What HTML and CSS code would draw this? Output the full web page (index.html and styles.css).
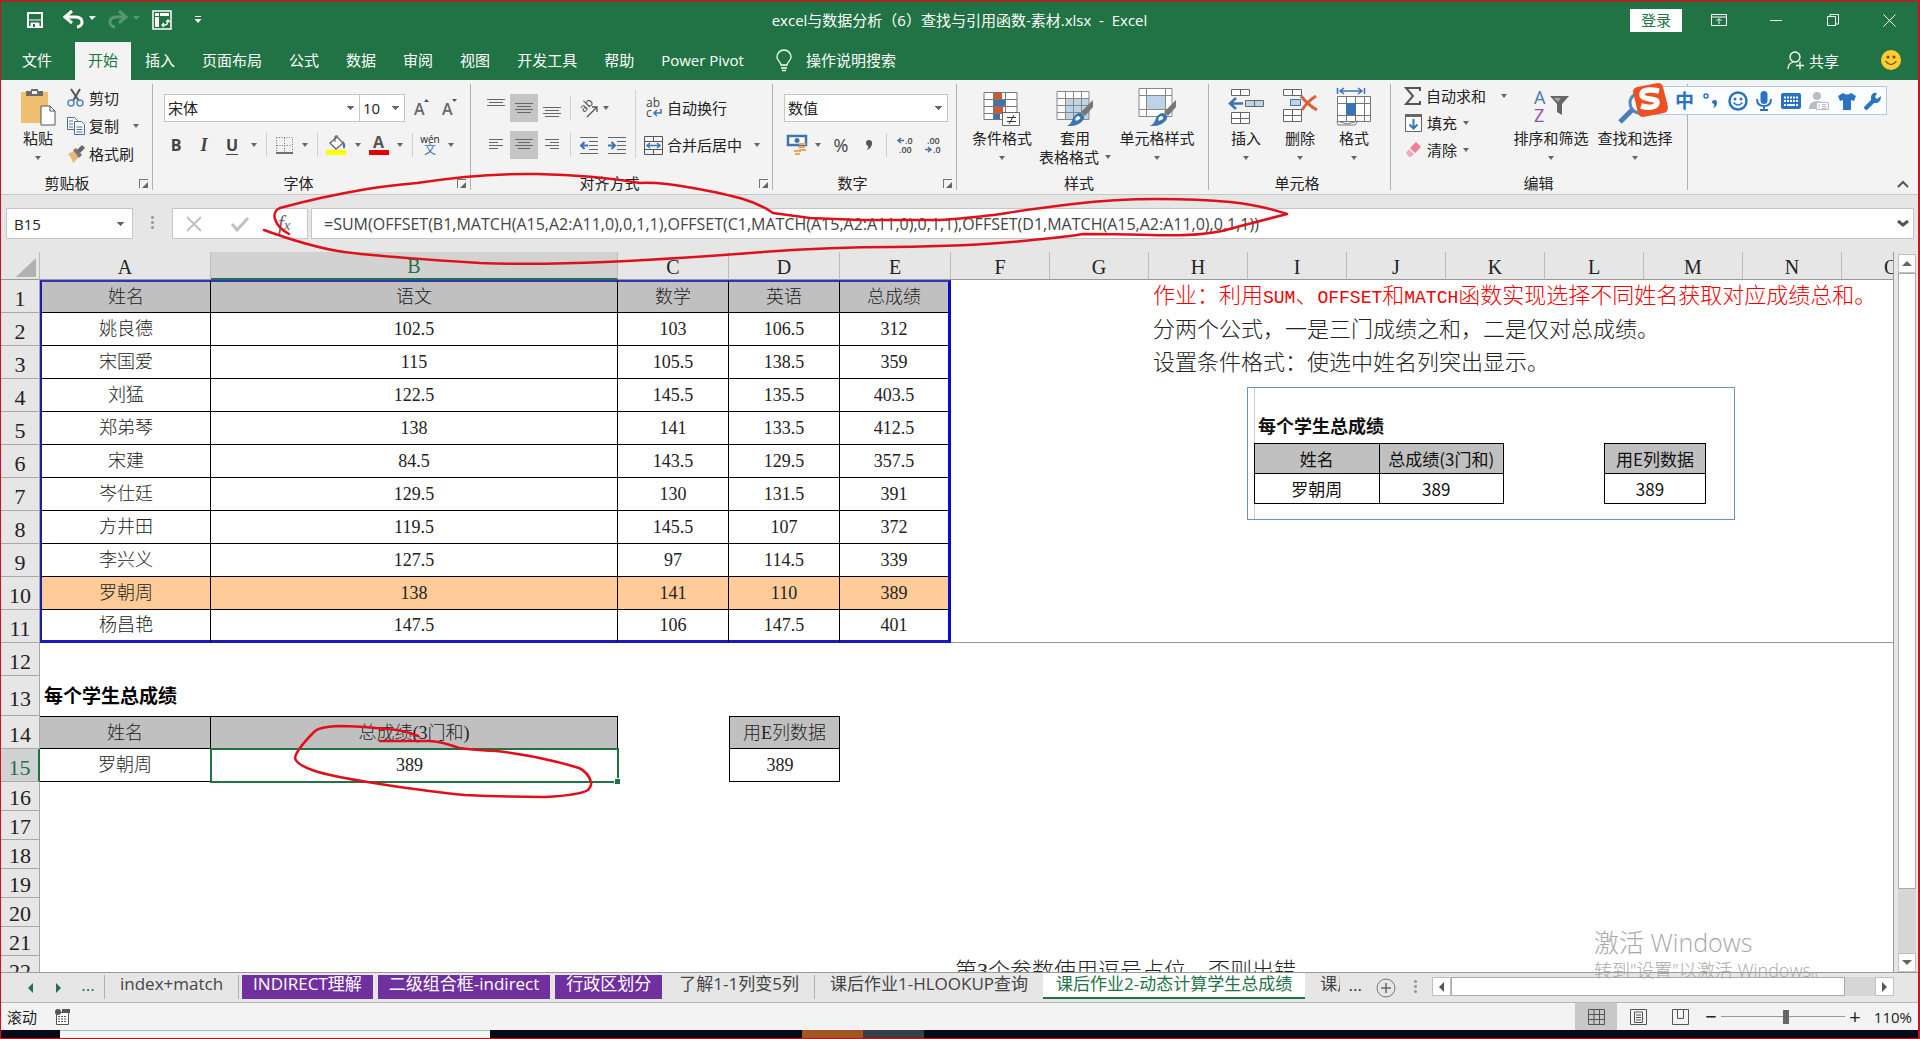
FILE: index.html
```html
<!DOCTYPE html>
<html lang="zh-CN">
<head>
<meta charset="utf-8">
<title>excel与数据分析（6）查找与引用函数-素材.xlsx - Excel</title>
<link rel="stylesheet" href="styles.css">
</head>
<body>
<div class="window">
  <header class="titlebar">
    <div class="quick">
      <button class="q" aria-label="保存"><svg width="18" height="18" viewBox="0 0 18 18"><path d="M2 2h14v14H2z" fill="none" stroke="#fff" stroke-width="2"/><path d="M2 9h14M5 12h8v4H5z" fill="#fff" stroke="#fff"/><path d="M7 13h2v3H7z" fill="#217346"/></svg></button>
      <button class="q wide" aria-label="撤消"><svg width="32" height="20" viewBox="0 0 32 20"><path d="M2 7h9c9 0 9 9 2 10" fill="none" stroke="#fff" stroke-width="3"/><path d="M8 1L1 7l7 6" fill="none" stroke="#fff" stroke-width="3"/><path d="M25 6h7l-4 4z" fill="#fff"/></svg></button>
      <button class="q wide dim" aria-label="恢复"><svg width="32" height="20" viewBox="0 0 32 20"><path d="M17 7H9C0 7 0 16 7 17" fill="none" stroke="#fff" stroke-width="3"/><path d="M11 1l7 6-7 6" fill="none" stroke="#fff" stroke-width="3"/><path d="M25 6h7l-4 4z" fill="#fff"/></svg></button>
      <button class="q" aria-label="数据透视表"><svg width="20" height="20" viewBox="0 0 20 20"><path d="M1 1h18v18H1z" fill="none" stroke="#fff" stroke-width="1.5"/><path d="M3 3h4v3H3zM8 3h9v3H8zM3 7h4v10H3z" fill="#fff"/><path d="M10 15h3q3 0 3-5M12 13l-2 2 2 2M14 12l2-2 2 2" fill="none" stroke="#fff" stroke-width="1.3"/></svg></button>
      <button class="q" aria-label="自定义快速访问工具栏"><svg width="8" height="8" viewBox="0 0 8 8"><path d="M1 .5h6" stroke="#fff"/><path d="M.5 3h7L4 7z" fill="#fff"/></svg></button>
    </div>
    <h1 class="doc">excel与数据分析（6）查找与引用函数-素材.xlsx &nbsp;-&nbsp; Excel</h1>
    <div class="winctl">
      <button class="login">登录</button>
      <button class="w" aria-label="功能区显示选项"><svg width="16" height="14" viewBox="0 0 16 14"><path d="M.5 1.500h15v11H.5zM1 4h14M8 11V6M5.500 8L8 5.500 10.500 8" fill="none" stroke="#fff"/></svg></button>
      <button class="w" aria-label="最小化"><svg width="12" height="12"><path d="M0 6.500h12" stroke="#fff"/></svg></button>
      <button class="w" aria-label="还原"><svg width="12" height="12" viewBox="0 0 12 12"><path d="M.5 2.500h8v9h-8zM3 2.500v-2h8.500V10H9" fill="none" stroke="#fff"/></svg></button>
      <button class="w" aria-label="关闭"><svg width="13" height="13" viewBox="0 0 13 13"><path d="M.5.5l12 12M12.500.5l-12 12" stroke="#fff"/></svg></button>
    </div>
  </header>

  <nav class="tabs">
    <a href="#" class="tab file">文件</a>
    <a href="#" class="tab on">开始</a>
    <a href="#" class="tab">插入</a>
    <a href="#" class="tab">页面布局</a>
    <a href="#" class="tab">公式</a>
    <a href="#" class="tab">数据</a>
    <a href="#" class="tab">审阅</a>
    <a href="#" class="tab">视图</a>
    <a href="#" class="tab">开发工具</a>
    <a href="#" class="tab">帮助</a>
    <a href="#" class="tab">Power Pivot</a>
    <a href="#" class="tab tell"><svg width="16" height="22" viewBox="0 0 16 22"><path d="M5 15c0-3-4-4-4-8a7 7 0 0 1 14 0c0 4-4 5-4 8zM5 18h6M6 20.500h4" fill="none" stroke="#fff" stroke-width="1.300"/></svg>操作说明搜索</a>
    <span class="grow"></span>
    <a href="#" class="share"><svg width="18" height="19" viewBox="0 0 18 19"><circle cx="8" cy="6" r="5" fill="none" stroke="#fff" stroke-width="1.300"/><path d="M1 18c0-4 2-6 5-7M9 14.500h8M13 10.500v8" fill="none" stroke="#fff" stroke-width="1.300"/></svg>共享</a>
    <button class="smile" aria-label="反馈"><svg width="20" height="20" viewBox="0 0 20 20"><circle cx="10" cy="10" r="10" fill="#fc3"/><circle cx="7" cy="7" r="1.500" fill="#6b4a00"/><circle cx="13" cy="7" r="1.500" fill="#6b4a00"/><path d="M4.500 11q5.500 7 11 0" fill="none" stroke="#6b4a00" stroke-width="1.200"/></svg></button>
  </nav>

  <section class="ribbon">
    <div class="group clip">
      <div class="tools">
        <button class="big paste"><svg width="36" height="38" viewBox="0 0 36 38"><path d="M1 4h27v31H1z" fill="#f0c070"/><path d="M6 3h5V1h7v2h5v5H6z" fill="#6a6a6a"/><path d="M12 3h5v3h-5z" fill="#f3f3f3"/><path d="M21 18h9l5 5v14H21z" fill="#fff" stroke="#555"/><path d="M30 18v5h5" fill="none" stroke="#555"/></svg><span>粘贴</span><i class="dd"></i></button>
        <div class="stack">
          <button class="sm"><svg width="18" height="18" viewBox="0 0 18 18"><path d="M4 0l8 12M13 0L6 12" stroke="#555" stroke-width="2"/><circle cx="4" cy="14" r="3" fill="none" stroke="#5b87c0" stroke-width="1.500"/><circle cx="13" cy="14" r="3" fill="none" stroke="#5b87c0" stroke-width="1.500"/></svg>剪切</button>
          <button class="sm"><svg width="18" height="18" viewBox="0 0 18 18"><path d="M.5.5h7l3 3v9H.5z" fill="#fff" stroke="#4a6e98"/><path d="M7.500 4.500h7l3 3v10h-10z" fill="#fff" stroke="#4a6e98"/><path d="M2 4h4M2 7h4M2 10h4M9.500 10h6M9.500 12.500h6M9.500 15h6" stroke="#4a6e98"/></svg>复制<i class="dd"></i></button>
          <button class="sm"><svg width="18" height="18" viewBox="0 0 18 18"><path d="M1 9l6-3 5 6-6 6q-1-5-5-9" fill="#e8b878"/><path d="M6 5l3-2 6 7-3 3z" fill="#777"/><path d="M10 5l5-5 3 3-5 5z" fill="#666"/></svg>格式刷</button>
        </div>
      </div>
      <div class="label">剪贴板</div><i class="launch"></i>
    </div>

    <div class="group font">
      <div class="tools rows">
        <div class="row">
          <select class="box fname" aria-label="字体"><option>宋体</option></select><select class="box fsize" aria-label="字号"><option>10</option></select>
          <button class="ib" aria-label="增大字号"><svg width="16" height="18" viewBox="0 0 16 18"><text x="0" y="16" class="ga">A</text><path d="M10 3l2.500-3L15 3z" fill="#555"/></svg></button>
          <button class="ib" aria-label="减小字号"><svg width="16" height="18" viewBox="0 0 16 18"><text x="0" y="16" class="ga">A</text><path d="M10 0l2.500 3L15 0z" fill="#555"/></svg></button>
        </div>
        <div class="row">
          <button class="ib b">B</button><button class="ib b it">I</button><button class="ib b un">U</button><i class="dd slot"></i><i class="sep"></i>
          <button class="ib n" aria-label="边框"><svg width="17" height="17" viewBox="0 0 17 17"><path d="M.5.5h16v15M.5.5v15M8.500 1v15M1 8.500h15" fill="none" stroke="#777" stroke-dasharray="1 1.500"/><path d="M0 16h17" stroke="#444" stroke-width="1.500"/></svg></button><i class="dd slot"></i><i class="sep"></i>
          <button class="ib" aria-label="填充颜色"><svg width="20" height="20" viewBox="0 0 20 20"><path d="M4 8l7-6 6 6-7 6z" fill="#fff" stroke="#666" stroke-width="1.300"/><path d="M9 7V1h3" fill="none" stroke="#555"/><path d="M17 6q4 4 1 8-2-3-1-8" fill="#3b78b8"/><path d="M0 15h20v5H0z" fill="#ff0"/></svg></button><i class="dd slot"></i>
          <button class="ib n" aria-label="字体颜色"><svg width="20" height="20" viewBox="0 0 20 20"><text x="4" y="13" class="gb">A</text><path d="M0 15h20v5H0z" fill="#e00000"/></svg></button><i class="dd slot"></i><i class="sep"></i>
          <button class="ib n wen"><span>wén</span><b>文</b></button><i class="dd slot"></i>
        </div>
      </div>
      <div class="label">字体</div><i class="launch"></i>
    </div>

    <div class="group align">
      <div class="tools">
        <div class="rows">
          <div class="row">
            <button class="ib" aria-label="顶端对齐"><svg width="18" height="18"><path d="M0 .5h18M2 3.500h14M0 6.500h18" class="ln"/></svg></button>
            <button class="ib act" aria-label="垂直居中"><svg width="18" height="18"><path d="M0 4.500h18M2 7.500h14M0 10.500h18M2 13.500h14" class="ln"/></svg></button>
            <button class="ib" aria-label="底端对齐"><svg width="18" height="18"><path d="M0 8.500h18M2 11.500h14M0 14.500h18M2 17.500h14" class="ln"/></svg></button><i class="sep"></i>
            <button class="ib" aria-label="方向"><svg width="20" height="20" viewBox="0 0 20 20"><text x="0" y="0" class="gs" transform="translate(5 15) rotate(-45)">ab</text><path d="M8 19l10-10M13 9h5v5" fill="none" stroke="#555" stroke-width="1.300"/></svg></button><i class="dd near"></i>
          </div>
          <div class="row">
            <button class="ib" aria-label="左对齐"><svg width="14" height="14"><path d="M0 1.500h14M0 4.500h9M0 7.500h14M0 10.500h9" class="ln"/></svg></button>
            <button class="ib act" aria-label="居中"><svg width="18" height="14"><path d="M0 1.500h18M3 4.500h12M0 7.500h18M3 10.500h12" class="ln"/></svg></button>
            <button class="ib" aria-label="右对齐"><svg width="14" height="14"><path d="M0 1.500h14M5 4.500h9M0 7.500h14M5 10.500h9" class="ln"/></svg></button><i class="sep"></i>
            <button class="ib" aria-label="减少缩进"><svg width="18" height="17"><path d="M0 .5h18M9 4.500h9M9 8.500h9M9 12.500h9M0 16.500h18" class="ln"/><path d="M8 8.500H1M4.500 5L1 8.500 4.500 12" class="bl"/></svg></button>
            <button class="ib" aria-label="增加缩进"><svg width="18" height="17"><path d="M0 .5h18M9 4.500h9M9 8.500h9M9 12.500h9M0 16.500h18" class="ln"/><path d="M0 8.500h7M3.500 5L7 8.500 3.500 12" class="bl"/></svg></button>
          </div>
        </div>
        <i class="vsep"></i>
        <div class="rows">
          <div class="row"><button class="sm"><svg width="19" height="19" viewBox="0 0 19 19"><text x="2" y="8" class="gs">ab</text><text x="2" y="18" class="gs">c</text><path d="M17 10v4h-6M13 11l-3 3 3 3" class="bl thin"/></svg>自动换行</button></div>
          <div class="row"><button class="sm"><svg width="19" height="19" viewBox="0 0 19 19"><path d="M.5.500h18v18H.5zM0 5.500h19M0 13.500h19M9.500 0v5M9.500 14v5" fill="none" stroke="#555"/><path d="M3 9.500h13M6 7L3 9.500 6 12M13 7l3 2.500-3 2.500" class="bl thin"/></svg>合并后居中<i class="dd"></i></button></div>
        </div>
      </div>
      <div class="label">对齐方式</div><i class="launch"></i>
    </div>

    <div class="group number">
      <div class="tools rows">
        <div class="row"><select class="box nfmt" aria-label="数字格式"><option>数值</option></select></div>
        <div class="row">
          <button class="ib n" aria-label="会计数字格式"><svg width="20" height="20" viewBox="0 0 20 20"><path d="M1 1h18v9H1z" fill="#fff" stroke="#3f74b0" stroke-width="2.500"/><circle cx="10" cy="5.500" r="2.500" fill="#3f74b0"/><path d="M12 8h7v2h-7zM11 11h7v2h-7zM12 14h7v2h-7zM7 15h7v2H7zM8 18h5v2H8z" fill="#eba85c"/></svg></button><i class="dd slot"></i>
          <button class="ib pct">%</button><button class="ib n" aria-label="千位分隔样式"><svg width="7" height="10" viewBox="0 0 7 10"><circle cx="3" cy="3" r="3" fill="#555"/><path d="M6 3q0 5-5 7 2-3 1-5z" fill="#555"/></svg></button><i class="sep"></i>
          <button class="ib" aria-label="增加小数位数"><svg width="16" height="18" viewBox="0 0 16 18"><text x="8" y="8" class="gn">.0</text><text x="2" y="17" class="gn">.00</text><path d="M7 4.500H1M4 2L1 4.500 4 7" class="bl thin"/></svg></button>
          <button class="ib" aria-label="减少小数位数"><svg width="16" height="18" viewBox="0 0 16 18"><text x="2" y="8" class="gn">.00</text><text x="8" y="17" class="gn">.0</text><path d="M0 13.500h6M3 11l3 2.500L3 16" class="bl thin"/></svg></button>
        </div>
      </div>
      <div class="label">数字</div><i class="launch"></i>
    </div>

    <div class="group styles">
      <div class="tools">
        <button class="big w74"><svg width="38" height="38" viewBox="0 0 38 38"><path d="M1 4h33v28H1z" fill="#fff"/><path d="M11 5h8v7h-8zM11 19h9v6h-9z" fill="#d0592b"/><path d="M11 12h11v7H11zM11 26h6v6h-6z" fill="#3b74b5"/><path d="M1 4.500h33v27H1zM1 11.500h33M1 18.500h33M1 25.500h33M10.500 4v28M22.500 4v28" fill="none" stroke="#777"/><path d="M19.500 24.500h17v13h-17z" fill="#fff" stroke="#666"/><path d="M24 29.500h9M24 33.500h9M31 27l-5 9" stroke="#333"/></svg><span>条件格式</span><i class="dd"></i></button>
        <button class="big w72"><svg width="38" height="38" viewBox="0 0 38 38"><path d="M1 4h32v27H1z" fill="#fff"/><path d="M9 11h24v20H9z" fill="#bdd3e8"/><path d="M1 3.500h32v28H1zM1 10.500h32M1 17.500h32M1 24.500h32M9.500 4v27M17.500 4v27M25.500 4v27" fill="none" stroke="#888"/><path d="M37 12v7l-8 9-4-4z" fill="#777"/><path d="M24 25q5 1 4 6-5 8-17 7 5-3 6-8 3-5 7-5" fill="#3b74b5"/><path d="M22 28q3 1 2 3l-4 2q-2-3 2-5" fill="#fff"/></svg><span>套用</span><span class="tight">表格格式<i class="dd"></i></span></button>
        <button class="big w92"><svg width="38" height="38" viewBox="0 0 38 38"><path d="M1 1h33v28H1z" fill="#fff"/><path d="M8 8h19v13H8z" fill="#bdd3e8"/><path d="M1 .5h33v28H1zM1 7.500h33M1 21.500h33M8.500 1v28M27.500 1v28" fill="none" stroke="#888"/><path d="M38 12v7l-8 9-4-4z" fill="#777"/><path d="M25 25q5 1 4 6-5 8-17 7 5-3 6-8 3-5 7-5" fill="#3b74b5"/><path d="M23 28q3 1 2 3l-4 2q-2-3 2-5" fill="#fff"/></svg><span>单元格样式</span><i class="dd"></i></button>
      </div>
      <div class="label">样式</div>
    </div>

    <div class="group cells">
      <div class="tools">
        <button class="big w54"><svg width="36" height="38" viewBox="0 0 36 38"><path d="M3.500 1.500h18v6h-18zM12.500 1v7M3.500 24.500h18v11h-18zM12.500 24v12M3 30.500h19" fill="#fff" stroke="#666"/><path d="M17.500 12.500h18v6h-18zM26.500 12v7" fill="#bdd3e8" stroke="#666"/><path d="M15 15.500H3M8 10l-6 5.500L8 21" fill="none" stroke="#3b74b5" stroke-width="2.500"/></svg><span>插入</span><i class="dd"></i></button>
        <button class="big w54"><svg width="36" height="38" viewBox="0 0 36 38"><path d="M1.500 1.500h18v6h-18zM10.500 1v7M1.500 21.500h18v12h-18zM10.500 21v13M1 27.500h19" fill="#fff" stroke="#666"/><path d="M8.500 11.500h10v6h-10z" fill="#bdd3e8" stroke="#3b74b5"/><path d="M19 8q7 9 16 14M34 8q-8 5-14 14" fill="none" stroke="#d9623b" stroke-width="3"/></svg><span>删除</span><i class="dd"></i></button>
        <button class="big w54"><svg width="36" height="38" viewBox="0 0 36 38"><path d="M1.500 0v6M28.500 0v6M4 3h22M8 0L4 3l4 3M22 0l4 3-4 3" fill="none" stroke="#3b74b5" stroke-width="1.500"/><path d="M1.500 8.500h33v25h-33zM1 15.500h34M1 27.500h34M10.500 8v25M19.500 8v25M28.500 8v25" fill="#fff" stroke="#777"/><path d="M10 15h10v12H10z" fill="#3b74b5"/><path d="M1 33l10 3 11-3-3 4h-6l-11 0z" fill="#fff" stroke="#777"/></svg><span>格式</span><i class="dd"></i></button>
      </div>
      <div class="label">单元格</div>
    </div>

    <div class="group edit">
      <div class="tools">
        <div class="stack">
          <button class="sm"><svg width="16" height="18" viewBox="0 0 16 18"><path d="M15 4V1H1l7 8-7 8h14v-3" fill="none" stroke="#555" stroke-width="2"/></svg>自动求和<i class="dd"></i></button>
          <button class="sm t"><svg width="17" height="18" viewBox="0 0 17 18"><path d="M.5.5h16v17H.5z" fill="#fff" stroke="#666"/><path d="M0 1.500h17" stroke="#666" stroke-width="3"/><path d="M8.500 5v9M4.500 10.500l4 4 4-4" class="bl"/></svg>填充<i class="dd"></i></button>
          <button class="sm t"><svg width="17" height="18" viewBox="0 0 17 18"><path d="M11 1l5 5-6 6-5-5z" fill="#ea7f98"/><path d="M4 8l5 5-3 3H4l-3-4z" fill="#f2a9b9"/></svg>清除<i class="dd"></i></button>
        </div>
        <button class="big w84"><svg width="36" height="38" viewBox="0 0 36 38"><text x="1" y="16" class="az" fill="#4a76b4">A</text><text x="1" y="34" class="az" fill="#9150a8">Z</text><path d="M17 8h19l-7 8v11l-5-3v-8z" fill="#666"/><path d="M21 10h7l-3 4z" fill="#aaa"/></svg><span>排序和筛选</span><i class="dd"></i></button>
        <button class="big w84"><svg width="36" height="38" viewBox="0 0 36 38"><circle cx="23" cy="15" r="10" fill="#fff" stroke="#5a87c0" stroke-width="3"/><path d="M15 22L3 34" stroke="#4a7cb8" stroke-width="5"/></svg><span>查找和选择</span><i class="dd"></i></button>
      </div>
      <div class="label">编辑</div>
    </div>
    <button class="fold" aria-label="折叠功能区"><svg width="12" height="8"><path d="M1 7l5-5 5 5" fill="none" stroke="#555" stroke-width="2"/></svg></button>

    <div class="ime">
      <svg class="slogo" width="37" height="36" viewBox="0 0 37 36"><path d="M5 5L26 1q4 0 5 4l5 20q0 5-4 6L11 35q-4 0-5-4L1 10q0-4 4-5z" fill="#ee4f23"/><path d="M27 9q-16-3-17 3c-1 7 16 3 15 9-1 5-9 5-16 3" fill="none" stroke="#fff" stroke-width="5.500"/></svg>
      <b>中</b>
      <svg width="16" height="16" viewBox="0 0 16 16"><circle cx="3" cy="3" r="2" fill="none" stroke="#2a73c4" stroke-width="1.500"/><path d="M9 8q5-3 5 2 0 4-4 5 2-2 1-4-2 0-2-3" fill="#2a73c4"/></svg>
      <svg width="20" height="20" viewBox="0 0 20 20"><circle cx="10" cy="10" r="8.500" fill="none" stroke="#2a73c4" stroke-width="2.500"/><circle cx="7" cy="8" r="1.500" fill="#2a73c4"/><circle cx="13" cy="8" r="1.500" fill="#2a73c4"/><path d="M5.500 11.500q4.500 5 9 0" fill="none" stroke="#2a73c4" stroke-width="1.500"/></svg>
      <svg width="16" height="20" viewBox="0 0 16 20"><rect x="4.500" y="0" width="7" height="13" rx="3.500" fill="#2a73c4"/><path d="M1 8q0 7 7 7t7-7M8 15v4M4 19h8" fill="none" stroke="#2a73c4" stroke-width="2"/></svg>
      <svg width="20" height="16" viewBox="0 0 20 16"><rect width="20" height="16" rx="2" fill="#2a73c4"/><path d="M3 4.500h14M3 8h14" stroke="#fff" stroke-width="2" stroke-dasharray="2 1"/><path d="M3 12h2M6 12h8M15 12h2" stroke="#fff" stroke-width="2"/></svg>
      <svg width="20" height="18" viewBox="0 0 20 18"><circle cx="8" cy="4" r="4" fill="#b9bec6"/><path d="M0 17q0-8 8-8 5 0 6 3v5z" fill="#b9bec6"/><path d="M7.500 10.500h12v7h-12z" fill="#fff" stroke="#b9bec6"/><path d="M10 12v4M13 12.500h4M13 14.500h4v2h-4" fill="none" stroke="#b9bec6"/></svg>
      <svg width="18" height="18" viewBox="0 0 18 18"><path d="M5 1q4 3 8 0l5 3-2 5-3-1v10H5V8L2 9 0 4z" fill="#2a73c4"/></svg>
      <svg width="18" height="18" viewBox="0 0 18 18"><path d="M17 4l-4 3-2-2 2-4Q8 0 7 5l0 3-7 7q0 3 3 3l7-7q7 1 7-7" fill="#2a73c4"/></svg>
    </div>
  </section>

  <section class="fbar">
    <select class="box namebox" aria-label="名称框"><option>B15</option></select>
    <i class="dots"></i>
    <div class="fx">
      <svg width="16" height="14"><path d="M1 0l14 14M15 0L1 14" stroke="#c0c0c0" stroke-width="2"/></svg>
      <svg width="18" height="14"><path d="M1 7l5 6L17 1" fill="none" stroke="#c0c0c0" stroke-width="3"/></svg>
      <em>f<small>x</small></em>
    </div>
    <label class="formula"><input type="text" aria-label="编辑栏" value="=SUM(OFFSET(B1,MATCH(A15,A2:A11,0),0,1,1),OFFSET(C1,MATCH(A15,A2:A11,0),0,1,1),OFFSET(D1,MATCH(A15,A2:A11,0),0,1,1))"><svg width="12" height="8"><path d="M1 1l5 4 5-4" fill="none" stroke="#555" stroke-width="3"/></svg></label>
  </section>

  <main class="work">
    <div class="sheet">
      <table class="grid">
        <colgroup><col class="c0"><col class="ca"><col class="cb"><col class="cc"><col class="cc"><col class="cc"><col class="cf"><col class="cf"><col class="cf"><col class="cf"><col class="cf"><col class="cf"><col class="cf"><col class="cf"><col class="cf"><col></colgroup>
        <thead><tr><th class="corner"><svg width="20" height="19"><path d="M20 0v19H0z" fill="#b1b1b1"/></svg></th><th>A</th><th class="sel">B</th><th>C</th><th>D</th><th>E</th><th>F</th><th>G</th><th>H</th><th>I</th><th>J</th><th>K</th><th>L</th><th>M</th><th>N</th><th class="last">O</th></tr></thead>
        <tbody class="data">
          <tr class="hd"><th>1</th><td>姓名</td><td>语文</td><td>数学</td><td>英语</td><td>总成绩</td><td class="x" colspan="2"></td><td class="x note red" colspan="8">作业：利用<code>SUM</code>、<code>OFFSET</code>和<code>MATCH</code>函数实现选择不同姓名获取对应成绩总和。</td></tr>
          <tr><th>2</th><td>姚良德</td><td>102.5</td><td>103</td><td>106.5</td><td>312</td><td class="x" colspan="2"></td><td class="x note" colspan="8">分两个公式，一是三门成绩之和，二是仅对总成绩。</td></tr>
          <tr><th>3</th><td>宋国爱</td><td>115</td><td>105.5</td><td>138.5</td><td>359</td><td class="x" colspan="2"></td><td class="x note" colspan="8">设置条件格式：使选中姓名列突出显示。</td></tr>
          <tr><th>4</th><td>刘猛</td><td>122.5</td><td>145.5</td><td>135.5</td><td>403.5</td><td class="x" colspan="10"></td></tr>
          <tr><th>5</th><td>郑弟琴</td><td>138</td><td>141</td><td>133.5</td><td>412.5</td><td class="x" colspan="10"></td></tr>
          <tr><th>6</th><td>宋建</td><td>84.5</td><td>143.5</td><td>129.5</td><td>357.5</td><td class="x" colspan="10"></td></tr>
          <tr><th>7</th><td>岑仕廷</td><td>129.5</td><td>130</td><td>131.5</td><td>391</td><td class="x" colspan="10"></td></tr>
          <tr><th>8</th><td>方井田</td><td>119.5</td><td>145.5</td><td>107</td><td>372</td><td class="x" colspan="10"></td></tr>
          <tr><th>9</th><td>李兴义</td><td>127.5</td><td>97</td><td>114.5</td><td>339</td><td class="x" colspan="10"></td></tr>
          <tr class="hit"><th>10</th><td>罗朝周</td><td>138</td><td>141</td><td>110</td><td>389</td><td class="x" colspan="10"></td></tr>
          <tr class="end"><th>11</th><td>杨昌艳</td><td>147.5</td><td>106</td><td>147.5</td><td>401</td><td class="x" colspan="10"></td></tr>
        </tbody>
        <tbody class="query">
          <tr><th>12</th><td class="x" colspan="15"></td></tr>
          <tr class="tall"><th>13</th><td class="x ttl" colspan="15">每个学生总成绩</td></tr>
          <tr class="hd"><th>14</th><td>姓名</td><td>总成绩(3门和)</td><td class="x"></td><td class="lb">用E列数据</td><td class="x" colspan="11"></td></tr>
          <tr><th class="sel">15</th><td>罗朝周</td><td class="cur num">389</td><td class="x"></td><td class="lb num">389</td><td class="x" colspan="11"></td></tr>
        </tbody>
        <tbody class="rest">
          <tr><th>16</th><td class="x" colspan="15"></td></tr>
          <tr><th>17</th><td class="x" colspan="15"></td></tr>
          <tr><th>18</th><td class="x" colspan="15"></td></tr>
          <tr><th>19</th><td class="x" colspan="15"></td></tr>
          <tr><th>20</th><td class="x" colspan="15"></td></tr>
          <tr><th>21</th><td class="x" colspan="15"></td></tr>
          <tr><th>22</th><td class="x" colspan="5"></td><td class="x note" colspan="10">第3个参数使用逗号占位，否则出错</td></tr>
        </tbody>
      </table>
      <figure class="pic">
        <figcaption>每个学生总成绩</figcaption>
        <div class="picrow">
          <table class="mini"><tr><th>姓名</th><th>总成绩(3门和)</th></tr><tr><td>罗朝周</td><td class="val">389</td></tr></table>
          <table class="mini one"><tr><th>用E列数据</th></tr><tr><td class="val">389</td></tr></table>
        </div>
      </figure>
    </div>
    <div class="vscroll"><button aria-label="向上"><i class="tri up"></i></button><div class="thumb"></div><div class="track"></div><button aria-label="向下"><i class="tri down"></i></button></div>
  </main>

  <nav class="sheets">
    <button class="nav" aria-label="上一张"><i class="tri left g"></i></button><button class="nav" aria-label="下一张"><i class="tri right g"></i></button><span class="more">...</span>
    <a href="#" class="st first">index+match</a>
    <a href="#" class="st pu">INDIRECT理解</a>
    <a href="#" class="st pu">二级组合框-indirect</a>
    <a href="#" class="st pu">行政区划分</a>
    <a href="#" class="st">了解1-1列变5列</a>
    <a href="#" class="st hl">课后作业1-HLOOKUP查询</a>
    <a href="#" class="st on">课后作业2-动态计算学生总成绩</a>
    <a href="#" class="st cut">课后</a><span class="more dk">...</span>
    <button class="plus" aria-label="新工作表"><svg width="20" height="20"><circle cx="10" cy="10" r="9" fill="none" stroke="#777"/><path d="M5 10h10M10 5v10" stroke="#666" stroke-width="1.500"/></svg></button>
    <i class="dots"></i>
    <div class="hscroll"><button aria-label="向左"><i class="tri left"></i></button><div class="thumb"></div><div class="track"></div><button aria-label="向右"><i class="tri right"></i></button></div>
  </nav>

  <footer class="status">
    <span>滚动</span>
    <svg width="15" height="16" viewBox="0 0 15 16"><path d="M1.500 3.500h12v12h-12z" fill="#fff" stroke="#555"/><path d="M7 0h8v4H7z" fill="#555"/><circle cx="3" cy="3" r="3" fill="#555"/><path d="M3 7.500h9M3 10h9M3 12.500h9" stroke="#555" stroke-dasharray="2 1"/></svg>
    <span class="grow"></span>
    <button class="view on" aria-label="普通"><svg width="17" height="16"><path d="M.5.5h16v15H.5zM0 5.500h17M0 10.500h17M6 0v16M11.500 0v16" fill="none" stroke="#555"/></svg></button>
    <button class="view" aria-label="页面布局"><svg width="17" height="16"><path d="M.5.5h16v15H.5zM4.500 3v10.500h8V3zM6 6h5M6 8.500h5M6 11h5" fill="none" stroke="#555"/></svg></button>
    <button class="view" aria-label="分页预览"><svg width="17" height="16"><path d="M.5.5h16v15H.5zM5.500 0v9.500h6V0" fill="none" stroke="#555"/></svg></button>
    <button class="zb">−</button><input type="range" min="10" max="200" value="110" aria-label="缩放"><button class="zb">+</button>
    <span class="pc">110%</span>
  </footer>
  <div class="task"><i class="k1"></i><i class="k2"></i><i class="k3"></i><i class="k4"></i></div>

  <div class="mark"><p>激活 Windows</p><p class="s">转到"设置"以激活 Windows。</p></div>
  <svg class="ink" width="1300" height="810" viewBox="0 0 1300 810">
    <path d="M264 230Q308 246 338 251T480 263Q537 265 605 262T750 253T893 247Q973 246 1023 241T1083 234Q1110 234 1150 235Q1205 237 1233 228L1287 214Q1260 205 1230 202T1157 199Q1115 199 1073 204T1007 213T940 220H860L810 218L773 213Q760 204 743 199T693 188T640 183Q593 175 537 174T417 183Q385 186 367 189Q320 197 280 208C270 212 274 226 289 234"/>
    <path d="M418 736Q400 729 386 729Q360 726 337 726Q320 727 315 731Q296 750 295 758Q296 764 312 770T380 784T465 795Q505 797 545 797Q580 795 588 790Q592 786 591 782Q588 772 579 768Q540 756 496 751Q475 750 459 748Q440 741 429 741H380"/>
  </svg>
</div>
</body>
</html>
```
FILE: styles.css
```css
* { box-sizing: border-box; }
body { margin: 0; font: 15px/20px "Open Sans", "Noto Sans CJK SC", sans-serif; color: #222; }
button, select, input { font: inherit; color: inherit; border: 0; background: none; padding: 0; margin: 0; }
a { color: inherit; text-decoration: none; }
svg { display: block; flex: none; overflow: visible; }
i { display: block; flex: none; }
.grow { flex: 1; }
.window { position: relative; display: flex; flex-direction: column; height: 100vh; overflow: hidden; background: #e6e6e6; border: 1px solid #d0101c; border-top: 2px solid #a02c28; border-right-width: 2px; border-bottom-color: #e00010; }

/* title bar */
.titlebar { display: grid; grid-template-columns: 1fr auto 1fr; height: 40px; padding-bottom: 4px; background: #217346; color: #fff; align-items: center; }
.quick { display: flex; padding-left: 25px; gap: 20px; align-items: center; }
.q { display: flex; }
.q.wide { margin-right: -8px; }
.q:last-child { margin-left: 2px; }
.dim { opacity: .25; }
.doc { margin: 0; font-size: 15px; font-weight: 400; white-space: nowrap; }
.winctl { display: flex; justify-content: flex-end; align-items: center; }
.login { width: 52px; height: 23px; background: #fff; color: #217346; margin-right: 8px; }
.w { width: 57px; height: 30px; display: flex; justify-content: center; align-items: center; }

/* ribbon tabs */
.tabs { display: flex; height: 38px; gap: 1px; padding-left: 8px; background: #217346; color: #fff; align-items: stretch; }
.tab { padding: 8px 13px 0; white-space: nowrap; }
.tab.file { margin-right: 9px; }
.tab.on { background: #f3f3f3; color: #217346; }
.tab.tell { display: flex; gap: 14px; align-items: flex-start; padding-left: 18px; }
.share { display: flex; gap: 4px; padding: 9px 41px 0 0; }
.smile { display: flex; padding: 8px 17px 0 0; }

/* ribbon */
.ribbon { position: relative; display: flex; height: 115px; background: #f3f3f3; border-bottom: 1px solid #c8c8c8; }
.group { position: relative; display: flex; flex-direction: column; justify-content: space-between; height: 112px; }
.group::after { content: ""; position: absolute; right: 0; top: 4px; bottom: 2px; width: 1px; background: #b0b0b0; }
.tools { display: flex; white-space: nowrap; }
.label { text-align: center; line-height: 18px; padding-right: 36px; }
.launch { position: absolute; right: 5px; bottom: 4px; width: 9px; height: 9px; border: solid #777; border-width: 1px 0 0 1px; }
.launch::after { content: ""; position: absolute; right: 0; bottom: 0; border: 3px solid transparent; border-right-color: #666; border-bottom-color: #666; }
.clip { width: 152px; }
.font { width: 318px; padding-left: 9px; }
.align { width: 302px; padding-left: 11px; }
.number { width: 184px; padding-left: 11px; }
.styles { width: 252px; padding-left: 8px; }
.cells { width: 182px; padding-left: 10px; }
.edit { width: 297px; padding-left: 14px; }
.clip .label { padding-right: 20px; }
.styles .label, .cells .label, .edit .label { padding-right: 16px; }
.dd { width: 0; height: 0; border: 3px solid transparent; border-top: 4px solid #666; border-bottom: 0; }
.slot { margin: 0 5px; }
.near { margin-right: 11px; }
.sep { width: 1px; height: 24px; margin: 0 4px; background: #d0d0d0; }
.vsep { width: 1px; height: 68px; margin: 10px 8px 0 4px; background: #d0d0d0; }
.big { display: flex; flex-direction: column; align-items: center; padding-top: 8px; line-height: 20px; }
.big svg { margin-bottom: 2px; }
.big > .dd { margin-top: 8px; }
.tight { display: flex; align-items: center; gap: 6px; line-height: 18px; }
.paste { width: 66px; padding-left: 8px; }
.w74 { width: 74px; } .w72 { width: 72px; } .w92 { width: 92px; } .w54 { width: 54px; } .w84 { width: 84px; }
.stack { display: flex; flex-direction: column; padding-top: 4px; }
.sm { display: flex; align-items: center; height: 28px; gap: 4px; }
.sm .dd { margin-left: 10px; }
.sm.t .dd { margin-left: 1px; }
.edit .stack { padding-top: 2px; width: 104px; }
.edit .sm { height: 27px; gap: 5px; }
.align .sm .dd { margin-left: 8px; }
.rows { display: flex; flex-direction: column; gap: 9px; padding-top: 14px; }
.row { display: flex; align-items: center; height: 28px; }
.align .tools { padding-top: 0; }
.box { appearance: none; background: #fff; border: 1px solid #c6c6c6; height: 28px; padding-left: 3px; border-radius: 0; background-image: linear-gradient(45deg, transparent 50%, #666 50%), linear-gradient(135deg, #666 50%, transparent 50%); background-size: 4px 4px; background-repeat: no-repeat; background-position: right 8px center, right 4px center; }
.fname { width: 196px; margin-left: 2px; }
.fsize { width: 46px; margin: 0 3px 0 -1px; }
.nfmt { width: 164px; }
.ib { display: flex; width: 28px; height: 28px; align-items: center; justify-content: center; }
.ib.n { width: 26px; }
.act { background: #c5c5c5; }
.b { font-weight: 700; font-size: 16px; color: #444; }
.it { font-family: "Liberation Serif", serif; font-style: italic; font-size: 18px; }
.un { text-decoration: underline; text-underline-offset: 3px; }
.wen { flex-direction: column; font-size: 10px; line-height: 10px; }
.wen b { font-size: 12px; font-weight: 400; line-height: 12px; color: #3b74b5; }
.ib.pct { font-size: 18px; width: 30px; color: #444; }
.ln { fill: none; stroke: #666; }
.bl { fill: none; stroke: #3b74b5; stroke-width: 2; }
.bl.thin { stroke-width: 1.5; }
.ga { font-size: 16px; font-weight: 600; fill: #666; }
.gb { font-size: 16px; font-weight: 700; fill: #555; }
.gs { font-size: 12px; fill: #444; }
.gn { font-size: 9px; font-weight: 600; fill: #444; }
.az { font-size: 18px; }
.fold { position: absolute; right: 9px; bottom: 6px; }
.ime { position: absolute; left: 1654px; top: 6px; width: 232px; height: 29px; display: flex; align-items: center; justify-content: space-between; padding: 0 4px 0 19px; background: #fcfdff; border: 1px solid #b4cbe8; color: #2a73c4; }
.ime b { width: 20px; font-size: 19px; }
.slogo { position: absolute; left: -24px; top: -5px; }

/* formula bar */
.fbar { display: flex; height: 57px; padding: 13px 4px 13px 5px; }
.fbar .box { width: 127px; height: 31px; padding-left: 7px; background-position: right 11px center, right 7px center; }
.dots { width: 3px; height: 16px; margin: 7px 18px; background: radial-gradient(circle, #999 1px, transparent 2px) 0 0 / 3px 5px; }
.fx { display: flex; width: 136px; background: #fff; border: 1px solid #c6c6c6; align-items: center; padding-left: 13px; gap: 29px; }
.fx em { font: italic 21px/24px "Liberation Serif", serif; color: #666; }
.fx small { font-size: 15px; }
.formula { display: flex; flex: 1; margin-left: 3px; padding: 0 4px 0 12px; background: #fff; border: 1px solid #c6c6c6; align-items: center; }
.formula input { flex: 1; outline: 0; color: #444; font: 16px/24px "Open Sans", sans-serif; }

/* sheet */
.work { display: flex; flex: 1; min-height: 0; border-bottom: 1px solid #999; }
.sheet { position: relative; flex: 1; overflow: hidden; background: #fff; border-right: 1px solid #999; }
.grid { table-layout: fixed; width: 100%; border-collapse: separate; border-spacing: 0; font: 300 18px/20px "Liberation Serif", "Noto Sans CJK SC", serif; color: #222; }
.c0 { width: 39px; } .ca { width: 171px; } .cb { width: 407px; } .cc { width: 111px; } .cf { width: 99px; }
.grid th { background: #e6e6e6; font-weight: 400; font-size: 22px; border: solid #a8a8a8; border-width: 0 1px 1px 0; padding: 6px 0 0; overflow: hidden; }
.grid thead th { height: 28px; font-size: 20px; padding: 2px 0 0; border-right-color: #bbb; border-bottom-color: #999; }
.grid thead th.sel { background: #d2d2d2; color: #217346; border-bottom: 2px solid #217346; }
.grid thead .corner { padding: 4px 0 0 15px; }
.grid thead .last { text-align: left; padding-left: 42px; border-right: 0; }
.grid td { text-align: center; padding: 0; border: solid #000; border-width: 0 1px 1px 0; white-space: nowrap; }
.grid td.x { border-width: 0; }
.data tr, .query tr { height: 33px; }
.data td:nth-child(2) { border-left: 2px solid #1b1bb0; }
.data td:nth-child(6) { border-right: 3px solid #0808d8; }
.data .hd td:not(.x) { border-top: 2px solid #3434b8; }
.hd td:not(.x) { background: #c0c0c0; }
.hit td:not(.x) { background: #ffcc99; }
.data .end td:not(.x) { border-bottom: 3px solid #1a1ac0; }
.data .end td.x { border-bottom: 1px solid #999; }
.grid .note { text-align: left; font-size: 22px; padding-left: 4px; }
.note code { font: 18px "Liberation Mono", monospace; }
.red { color: #f00000; }
.query .tall { height: 40px; }
.query .ttl { text-align: left; font-weight: 700; font-size: 19px; color: #000; padding: 2px 0 0 4px; }
.query .hd td:not(.x) { border-top: 1px solid #000; }
.grid .lb { border-left-width: 1px; }
.grid .num { padding-right: 9px; }
.grid .query th.sel { background: #d2d2d2; color: #217346; border-right: 2px solid #217346; }
.cur { position: relative; outline: 2px solid #217346; outline-offset: -1px; }
.cur::after { content: ""; position: absolute; right: -3px; bottom: -3px; width: 5px; height: 5px; background: #217346; border: solid #fff; border-width: 1px 0 0 1px; }
.rest tr { height: 29px; }
.grid .rest th { padding-top: 4px; }
.pic { position: absolute; left: 1246px; top: 135px; width: 488px; height: 133px; margin: 0; padding: 26px 0 0 6px; background: linear-gradient(#ccc, #ccc) 6px 0 / 1px 100% no-repeat #fff; border: 1px solid #6f93b0; font: 17px/22px "Noto Sans CJK SC", sans-serif; color: #111; }
.pic figcaption { padding: 0 4px; font-weight: 700; font-size: 18px; }
.picrow { display: flex; gap: 100px; padding-top: 7px; }
.mini { width: 250px; border-collapse: collapse; table-layout: fixed; }
.mini.one { width: 102px; }
.mini th, .mini td { height: 30px; padding: 0; border: 1px solid #000; font-weight: 400; text-align: center; }
.mini th { background: #c0c0c0; white-space: nowrap; }
.mini .val { padding-right: 10px; }

/* scroll bars */
.vscroll { width: 24px; margin-top: 2px; padding: 0 2px 0 4px; display: flex; flex-direction: column; }
.vscroll button, .hscroll button { background: #fff; border: 1px solid #c0c0c0; display: flex; align-items: center; justify-content: center; flex: none; }
.vscroll button { height: 19px; }
.thumb { background: #fff; border: 1px solid #aaa; }
.track { background: #d6d6d6; }
.vscroll .thumb { flex: 616; } .vscroll .track { flex: 64; }
.tri { width: 0; height: 0; border: 5px solid transparent; }
.up { border-bottom-color: #666; border-top: 0; } .down { border-top-color: #666; border-bottom: 0; }
.left { border-right-color: #555; border-left: 0; } .right { border-left-color: #555; border-right: 0; }
.left.g { border-right-color: #217346; } .right.g { border-left-color: #217346; }

/* sheet tabs */
.sheets { display: flex; height: 29px; padding-left: 15px; white-space: nowrap; font-size: 17px; line-height: 17px; color: #444; }
.nav { width: 28px; display: flex; justify-content: center; align-items: center; }
.more { width: 32px; text-align: center; color: #217346; padding-top: 3px; }
.st { height: 24px; margin-top: 2px; padding: 0 15px; border-right: 1px solid #b0b0b0; }
.st.first { border-left: 1px solid #b0b0b0; }
.st.pu { margin-left: 3px; padding: 0 11px; background: #7030a0; color: #fff; border-right: 2px solid #e6e6e6; }
.st.hl { border-right: 0; }
.st.on { height: 26px; margin-top: 0; padding: 2px 13px 0; background: #fff; color: #217346; border-right: 0; border-bottom: 2px solid #217346; }
.st.cut { width: 35px; padding: 0 0 0 15px; overflow: hidden; border: 0; }
.dk { width: 30px; color: #333; }
.plus { display: flex; align-items: center; margin-left: 6px; }
.sheets .dots { margin: 6px 15px 0 18px; }
.hscroll { flex: 1; display: flex; height: 19px; margin: 4px 24px 0 0; }
.hscroll button { width: 19px; }
.hscroll .thumb { flex: 392; } .hscroll .track { flex: 30; }

/* status bar */
.status { display: flex; align-items: center; height: 28px; padding: 0 6px; background: #f3f3f3; border-top: 1px solid #b8b8b8; }
.status > svg { margin-left: 18px; }
.view { width: 42px; height: 27px; display: flex; align-items: center; justify-content: center; }
.view.on { background: #c8c8c8; }
.zb { width: 20px; font-size: 20px; }
.status input { appearance: none; width: 124px; height: 14px; background: linear-gradient(#999, #999) 0 center / 100% 1px no-repeat; }
.status input::-webkit-slider-thumb { appearance: none; width: 6px; height: 14px; background: #666; }
.pc { width: 47px; text-align: right; }
.task { display: flex; height: 8px; background: #050a18; }
.k1 { width: 59px; } .k2 { width: 430px; background: #f4f4f4; border-top: 1px solid #9cc8b0; } .k3 { width: 61px; margin-left: 312px; background: #a05522; } .k4 { width: 61px; background: #3a3f47; }

/* overlays */
.mark { position: absolute; right: 92px; bottom: 56px; color: #a8a8a8; white-space: nowrap; width: 232px; }
.mark p { margin: 0; font-size: 25px; line-height: 32px; font-weight: 300; }
.mark .s { font-size: 18px; line-height: 24px; }
.ink { position: absolute; left: -1px; top: -2px; pointer-events: none; fill: none; stroke: #e0101a; stroke-width: 2.5; stroke-linejoin: round; stroke-linecap: round; }
```
